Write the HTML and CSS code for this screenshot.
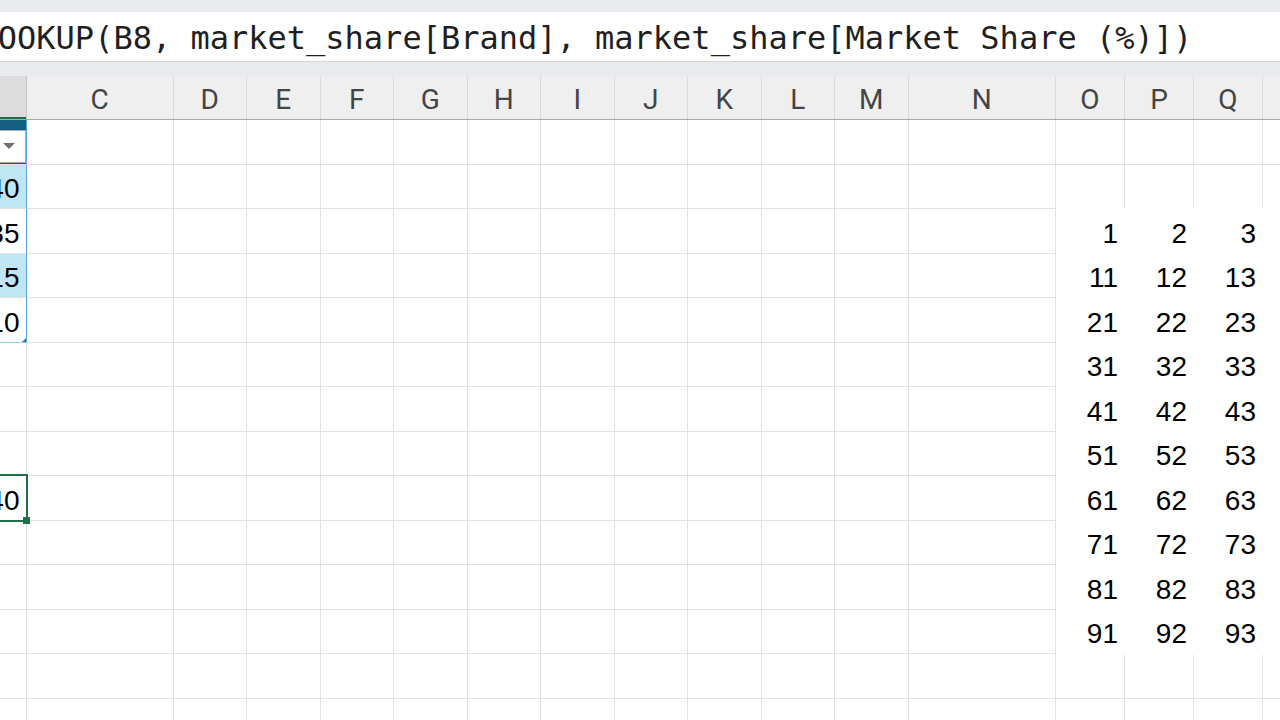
FILE: index.html
```html
<!DOCTYPE html>
<html lang="en">
<head>
<meta charset="utf-8">
<title>Sheet</title>
<link rel="stylesheet" href="styles.css">
</head>
<body>
<div class="sheet">
  <div class="top-strip"></div>
  <div class="formula-bar"><span class="formula">=XLOOKUP(B8, market_share[Brand], market_share[Market Share (%)])</span></div>
  <div class="strip-gap"></div>

  <div class="col-headers">
    <div class="hc hc-active"></div>
    <div class="hc">C</div><div class="hc">D</div><div class="hc">E</div><div class="hc">F</div>
    <div class="hc">G</div><div class="hc">H</div><div class="hc">I</div><div class="hc">J</div>
    <div class="hc">K</div><div class="hc">L</div><div class="hc">M</div><div class="hc">N</div>
    <div class="hc">O</div><div class="hc">P</div><div class="hc">Q</div><div class="hc">R</div>
  </div>

  <div class="grid">
    <!-- row 1 -->
    <div class="c tb-head"><span class="filter-btn"><span class="filter-arrow"></span></span></div>
    <div class="c"></div><div class="c"></div><div class="c"></div><div class="c"></div><div class="c"></div><div class="c"></div><div class="c"></div><div class="c"></div><div class="c"></div><div class="c"></div><div class="c"></div><div class="c"></div><div class="c"></div><div class="c"></div><div class="c"></div><div class="c"></div>
    <!-- row 2 -->
    <div class="c tb band">40</div>
    <div class="c"></div><div class="c"></div><div class="c"></div><div class="c"></div><div class="c"></div><div class="c"></div><div class="c"></div><div class="c"></div><div class="c"></div><div class="c"></div><div class="c"></div><div class="c"></div><div class="c"></div><div class="c"></div><div class="c"></div><div class="c"></div>
    <!-- row 3 -->
    <div class="c tb">35</div>
    <div class="c"></div><div class="c"></div><div class="c"></div><div class="c"></div><div class="c"></div><div class="c"></div><div class="c"></div><div class="c"></div><div class="c"></div><div class="c"></div><div class="c"></div><div class="c"></div><div class="c"></div><div class="c"></div><div class="c"></div><div class="c"></div>
    <!-- row 4 -->
    <div class="c tb band">15</div>
    <div class="c"></div><div class="c"></div><div class="c"></div><div class="c"></div><div class="c"></div><div class="c"></div><div class="c"></div><div class="c"></div><div class="c"></div><div class="c"></div><div class="c"></div><div class="c"></div><div class="c"></div><div class="c"></div><div class="c"></div><div class="c"></div>
    <!-- row 5 -->
    <div class="c tb tb-last">10<span class="resize-handle"></span></div>
    <div class="c"></div><div class="c"></div><div class="c"></div><div class="c"></div><div class="c"></div><div class="c"></div><div class="c"></div><div class="c"></div><div class="c"></div><div class="c"></div><div class="c"></div><div class="c"></div><div class="c"></div><div class="c"></div><div class="c"></div><div class="c"></div>
    <!-- row 6 -->
    <div class="c"></div>
    <div class="c"></div><div class="c"></div><div class="c"></div><div class="c"></div><div class="c"></div><div class="c"></div><div class="c"></div><div class="c"></div><div class="c"></div><div class="c"></div><div class="c"></div><div class="c"></div><div class="c"></div><div class="c"></div><div class="c"></div><div class="c"></div>
    <!-- row 7 -->
    <div class="c"></div>
    <div class="c"></div><div class="c"></div><div class="c"></div><div class="c"></div><div class="c"></div><div class="c"></div><div class="c"></div><div class="c"></div><div class="c"></div><div class="c"></div><div class="c"></div><div class="c"></div><div class="c"></div><div class="c"></div><div class="c"></div><div class="c"></div>
    <!-- row 8 -->
    <div class="c"></div>
    <div class="c"></div><div class="c"></div><div class="c"></div><div class="c"></div><div class="c"></div><div class="c"></div><div class="c"></div><div class="c"></div><div class="c"></div><div class="c"></div><div class="c"></div><div class="c"></div><div class="c"></div><div class="c"></div><div class="c"></div><div class="c"></div>
    <!-- row 9 -->
    <div class="c active">40<span class="fill-handle"></span></div>
    <div class="c"></div><div class="c"></div><div class="c"></div><div class="c"></div><div class="c"></div><div class="c"></div><div class="c"></div><div class="c"></div><div class="c"></div><div class="c"></div><div class="c"></div><div class="c"></div><div class="c"></div><div class="c"></div><div class="c"></div><div class="c"></div>
    <!-- row 10 -->
    <div class="c"></div>
    <div class="c"></div><div class="c"></div><div class="c"></div><div class="c"></div><div class="c"></div><div class="c"></div><div class="c"></div><div class="c"></div><div class="c"></div><div class="c"></div><div class="c"></div><div class="c"></div><div class="c"></div><div class="c"></div><div class="c"></div><div class="c"></div>
    <!-- row 11 -->
    <div class="c"></div>
    <div class="c"></div><div class="c"></div><div class="c"></div><div class="c"></div><div class="c"></div><div class="c"></div><div class="c"></div><div class="c"></div><div class="c"></div><div class="c"></div><div class="c"></div><div class="c"></div><div class="c"></div><div class="c"></div><div class="c"></div><div class="c"></div>
    <!-- row 12 -->
    <div class="c"></div>
    <div class="c"></div><div class="c"></div><div class="c"></div><div class="c"></div><div class="c"></div><div class="c"></div><div class="c"></div><div class="c"></div><div class="c"></div><div class="c"></div><div class="c"></div><div class="c"></div><div class="c"></div><div class="c"></div><div class="c"></div><div class="c"></div>
    <!-- row 13 -->
    <div class="c"></div>
    <div class="c"></div><div class="c"></div><div class="c"></div><div class="c"></div><div class="c"></div><div class="c"></div><div class="c"></div><div class="c"></div><div class="c"></div><div class="c"></div><div class="c"></div><div class="c"></div><div class="c"></div><div class="c"></div><div class="c"></div><div class="c"></div>
    <!-- row 14 -->
    <div class="c"></div>
    <div class="c"></div><div class="c"></div><div class="c"></div><div class="c"></div><div class="c"></div><div class="c"></div><div class="c"></div><div class="c"></div><div class="c"></div><div class="c"></div><div class="c"></div><div class="c"></div><div class="c"></div><div class="c"></div><div class="c"></div><div class="c"></div>
  </div>

  <div class="float-table">
    <div class="fv">1</div><div class="fv">2</div><div class="fv">3</div>
    <div class="fv">11</div><div class="fv">12</div><div class="fv">13</div>
    <div class="fv">21</div><div class="fv">22</div><div class="fv">23</div>
    <div class="fv">31</div><div class="fv">32</div><div class="fv">33</div>
    <div class="fv">41</div><div class="fv">42</div><div class="fv">43</div>
    <div class="fv">51</div><div class="fv">52</div><div class="fv">53</div>
    <div class="fv">61</div><div class="fv">62</div><div class="fv">63</div>
    <div class="fv">71</div><div class="fv">72</div><div class="fv">73</div>
    <div class="fv">81</div><div class="fv">82</div><div class="fv">83</div>
    <div class="fv">91</div><div class="fv">92</div><div class="fv">93</div>
  </div>
</div>
</body>
</html>
```

FILE: styles.css
```css
html, body {
  margin: 0;
  padding: 0;
  background: #ffffff;
  overflow: hidden;
}

.sheet {
  position: relative;
  width: 1280px;
  height: 720px;
  overflow: hidden;
  font-family: "Liberation Sans", Arial, sans-serif;
}

.top-strip {
  height: 12px;
  background: #e8eaed;
}

.formula-bar {
  height: 50px;
  box-sizing: border-box;
  background: #ffffff;
  border-bottom: 1px solid #d3d5d8;
  overflow: hidden;
  white-space: nowrap;
  padding-top: 3px;
}

.formula {
  display: block;
  margin-left: -60px;
  font-family: "DejaVu Sans Mono", "Liberation Mono", monospace;
  font-size: 32px;
  line-height: 46px;
  color: #1f1f1f;
}

.strip-gap {
  height: 14px;
  background: #e8eaed;
}

.col-headers,
.grid {
  display: grid;
  width: 1337px;
  grid-template-columns: 26.5px 147px repeat(10, 73.5px) 147.5px 69px 69px 69px 73.5px;
}

.col-headers {
  height: 44px;
  box-sizing: border-box;
  background: #efefef;
  border-bottom: 1px solid #a8a8a8;
}

.hc {
  display: flex;
  align-items: flex-end;
  justify-content: center;
  padding-bottom: 3px;
  border-right: 1px solid #dadada;
  font-family: Roboto, "Open Sans", sans-serif;
  font-size: 28px;
  color: #444444;
  overflow: hidden;
}

.hc-active {
  background: #dcdcdc;
  border-right-color: #c4c4c4;
  box-shadow: inset 0 -2px 0 #1e7145;
}

.grid {
  grid-auto-rows: 44.5px;
}

.c {
  position: relative;
  box-sizing: border-box;
  border-right: 1px solid #e2e2e2;
  border-bottom: 1px solid #e2e2e2;
  display: flex;
  align-items: flex-end;
  justify-content: flex-end;
  padding: 0 6px 3px 0;
  font-size: 28px;
  color: #000000;
  white-space: nowrap;
}

/* table in column B */
.tb {
  border-right: 1px solid #4ea8dc;
}

.tb.band {
  background: #c0e6f5;
}

.tb-last {
  border-bottom-color: #8ccbee;
}

.tb-head {
  background: #156082;
  border-right: 1px solid #4ea8dc;
  padding: 0;
  align-items: flex-end;
}

.filter-btn {
  flex-shrink: 0;
  width: 60px;
  height: 33px;
  margin-bottom: 1px;
  box-sizing: border-box;
  background: #ffffff;
  border: 1px solid #a9a9a9;
  display: flex;
  align-items: center;
  justify-content: flex-end;
  padding-right: 10px;
}

.filter-arrow {
  width: 0;
  height: 0;
  border-left: 6px solid transparent;
  border-right: 6px solid transparent;
  border-top: 6px solid #707070;
}

.resize-handle {
  position: absolute;
  right: 0;
  bottom: 0;
  width: 0;
  height: 0;
  border-left: 4px solid transparent;
  border-bottom: 4px solid #2f6fb5;
}

/* active cell B8 */
.active::after {
  content: "";
  position: absolute;
  left: -4px;
  top: -2px;
  right: -2px;
  bottom: -2px;
  border: 2px solid #1e7145;
  pointer-events: none;
}

.fill-handle {
  position: absolute;
  right: -4px;
  bottom: -4px;
  width: 7px;
  height: 7px;
  background: #1e7145;
  z-index: 2;
}

/* floating block over columns O:Q */
.float-table {
  position: absolute;
  left: 1056px;
  top: 208px;
  width: 224px;
  height: 447px;
  padding-top: 1px;
  box-sizing: border-box;
  background: #ffffff;
  display: grid;
  grid-template-columns: 69px 69px 69px;
  grid-auto-rows: 44.5px;
}

.fv {
  display: flex;
  align-items: flex-end;
  justify-content: flex-end;
  padding: 0 7px 4px 0;
  font-size: 28px;
  color: #000000;
}
```
